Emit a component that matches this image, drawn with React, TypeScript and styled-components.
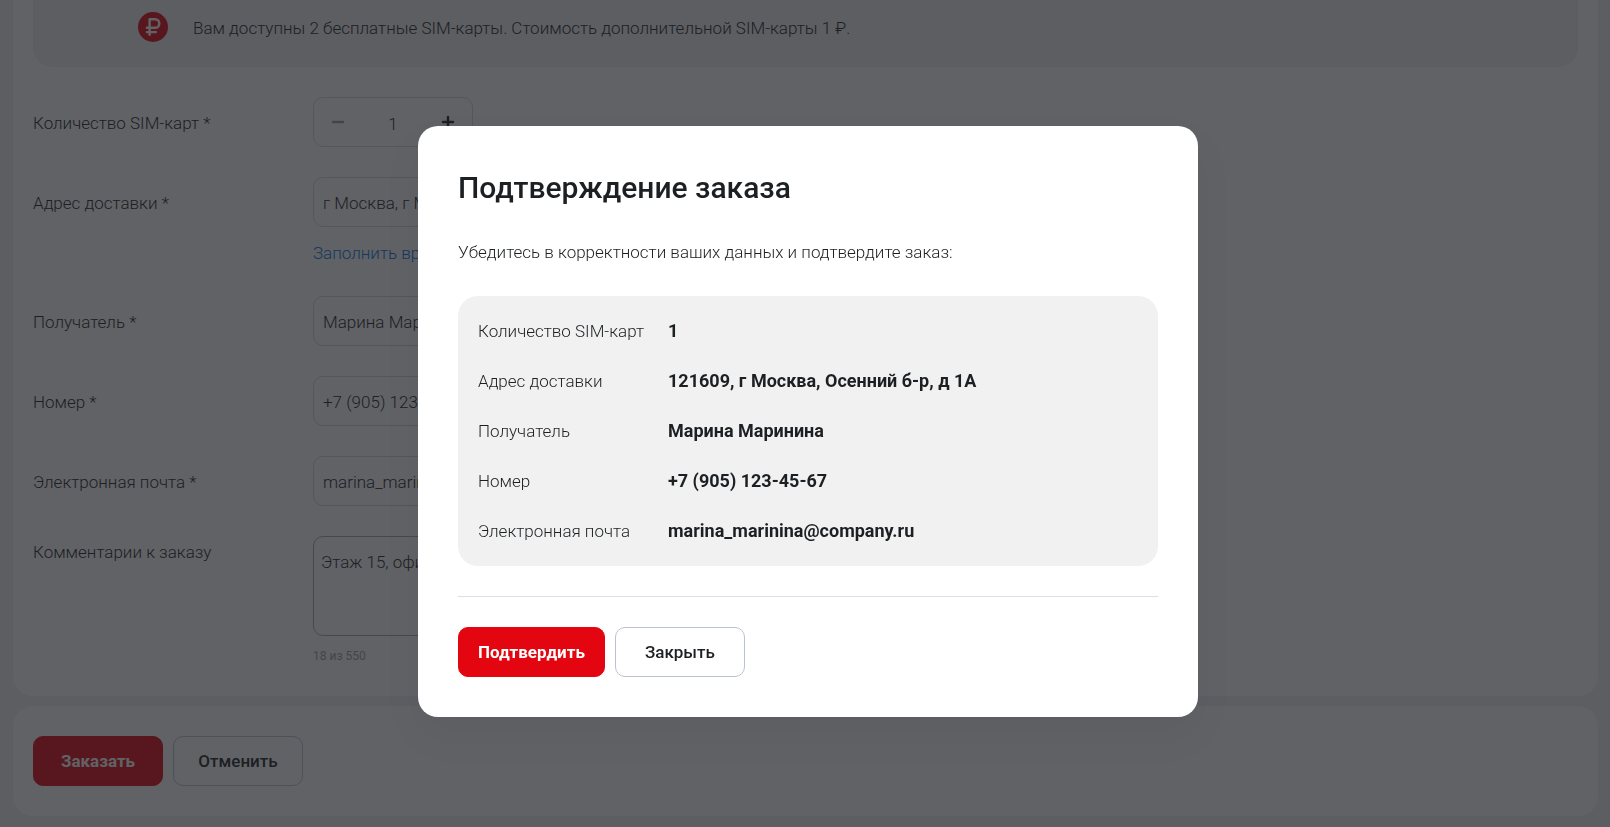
import React, { useState } from "react";
import styled, { createGlobalStyle, css } from "styled-components";

const ink = "#1d2023";
const red = "#e30611";
const fontStack = `Roboto, "Noto Sans", sans-serif`;

const GlobalStyle = createGlobalStyle`
  *, *::before, *::after { box-sizing: border-box; }
  body {
    margin: 0;
    background: #f0f0f6;
    color: ${ink};
    font: 300 17px/24px ${fontStack};
  }
  button, input, textarea { font: inherit; color: inherit; }
`;

const Page = styled.main`
  display: flex;
  flex-direction: column;
  gap: 10px;
  padding: 0 12px 11px 13px;
`;

const panel = css`
  background: #fff;
  padding: 30px 20px;
  border-radius: 20px;
`;

const FormPanel = styled.form`
  ${panel}
  padding-top: 0;
  border-radius: 0 0 20px 20px;
  display: flex;
  flex-direction: column;
  gap: 30px;
`;

const ActionsPanel = styled.div`
  ${panel}
`;

const Notice = styled.div`
  display: flex;
  align-items: center;
  gap: 25px;
  padding: 12px 20px 25px 105px;
  background: #f0f0f1;
  border-radius: 0 0 20px 20px;
`;

const NoticeText = styled.p`
  margin: 0;
  padding-top: 2px;
`;

const Row = styled.div`
  display: grid;
  grid-template-columns: 280px minmax(160px, 500px);
`;

const Label = styled.label<{ $top?: boolean }>`
  padding-top: 2px;
  line-height: ${(p) => (p.$top ? "28px" : "48px")};
`;

const Field = styled.div`
  display: flex;
  flex-direction: column;
  align-items: flex-start;
`;

const TextInput = styled.input`
  width: 100%;
  height: 50px;
  padding: 2px 9px 0;
  border: 1px solid #d4d7dc;
  border-radius: 10px;
  background: transparent;
`;

const Comment = styled.textarea`
  display: block;
  width: 100%;
  height: 100px;
  padding: 13px 7px;
  border: 1px solid #a6a9b0;
  border-radius: 10px;
  background: transparent;
  resize: none;
`;

const Hint = styled.span`
  margin-top: 10px;
  font-size: 12px;
  font-weight: 400;
  line-height: 20px;
  color: #969fa8;
`;

const TextLink = styled.a`
  margin-top: 14px;
  line-height: 25px;
  color: #0070e5;
  text-decoration: none;
`;

const Stepper = styled.div`
  display: grid;
  grid-template-columns: 48px 1fr 48px;
  width: 160px;
  height: 50px;
  border: 1px solid #d4d7dc;
  border-radius: 10px;
`;

const StepButton = styled.button`
  display: grid;
  place-items: center;
  padding: 0;
  border: 0;
  background: none;
  color: ${ink};

  &:disabled {
    color: #969fa8;
  }
`;

const StepValue = styled.input`
  width: 100%;
  padding: 4px 0 0;
  border: 0;
  background: none;
  text-align: center;
`;

const Buttons = styled.div`
  display: flex;
  gap: 10px;
`;

const Button = styled.button<{ $primary?: boolean }>`
  min-width: 130px;
  height: 50px;
  padding: 0 19px;
  border: 1px solid ${(p) => (p.$primary ? red : "#bcc3d0")};
  border-radius: 10px;
  background: ${(p) => (p.$primary ? red : "transparent")};
  color: ${(p) => (p.$primary ? "#fff" : ink)};
  font-weight: ${(p) => (p.$primary ? 700 : 500)};
`;

const Overlay = styled.div`
  position: fixed;
  inset: 0;
  display: grid;
  place-items: center;
  padding: 16px 0 0 6px;
  background: rgba(29, 32, 35, 0.7);
`;

const Dialog = styled.section`
  width: 780px;
  max-width: 100%;
  padding: 40px;
  border-radius: 20px;
  background: #fff;
  box-shadow: 0 18px 40px rgba(0, 25, 32, 0.05);
`;

const Title = styled.h2`
  margin: 0 0 30px;
  font-size: 30px;
  line-height: 44px;
  font-weight: 500;
`;

const Lead = styled.p`
  margin: 0 0 32px;
`;

const Summary = styled.dl`
  margin: 0;
  padding: 10px 20px;
  border-radius: 20px;
  background: #f1f1f1;
`;

const SummaryRow = styled.div`
  display: grid;
  grid-template-columns: 190px 1fr;
  line-height: 50px;
`;

const Term = styled.dt``;

const Value = styled.dd`
  margin: 0;
  font-size: 18px;
  font-weight: 700;
`;

const Divider = styled.hr`
  height: 1px;
  margin: 30px 0;
  border: 0;
  background: #dcdfe9;
`;

const RubleIcon = () => (
  <svg width="30" height="30" viewBox="0 0 30 30" fill="none" aria-hidden="true">
    <circle cx="15" cy="15" r="15" fill={red} />
    <path
      d="M11.6 22.7V7.2h5.4a4.3 4.3 0 0 1 0 8.6H8.9M8.9 20.1h9"
      stroke="#fff"
      strokeWidth="2.4"
      strokeLinecap="round"
      strokeLinejoin="round"
    />
  </svg>
);

const StepIcon = ({ plus }: { plus?: boolean }) => (
  <svg width="14" height="14" viewBox="0 0 14 14" fill="none" aria-hidden="true">
    <path
      d={plus ? "M2 7h10M7 2v10" : "M2 7h10"}
      stroke="currentColor"
      strokeWidth="2.4"
      strokeLinecap="round"
    />
  </svg>
);

const fields = [
  { id: "recipient", label: "Получатель *", value: "Марина Маринина" },
  { id: "phone", label: "Номер *", value: "+7 (905) 123-45-67" },
  { id: "email", label: "Электронная почта *", value: "marina_marinina@company.ru" },
];

const COMMENT_LIMIT = 550;

export default function App() {
  const [count, setCount] = useState(1);
  const [comment, setComment] = useState("Этаж 15, офис 1502");
  const [open, setOpen] = useState(true);

  const summary = [
    ["Количество SIM-карт", String(count)],
    ["Адрес доставки", "121609, г Москва, Осенний б-р, д 1А"],
    ["Получатель", "Марина Маринина"],
    ["Номер", "+7 (905) 123-45-67"],
    ["Электронная почта", "marina_marinina@company.ru"],
  ];

  return (
    <>
      <GlobalStyle />
      <Page>
        <FormPanel id="order" onSubmit={(e) => e.preventDefault()}>
          <Notice>
            <RubleIcon />
            <NoticeText>
              Вам доступны 2 бесплатные SIM-карты. Стоимость дополнительной SIM-карты 1 ₽.
            </NoticeText>
          </Notice>

          <Row>
            <Label htmlFor="count">Количество SIM-карт *</Label>
            <Stepper>
              <StepButton
                type="button"
                aria-label="Уменьшить"
                disabled={count <= 1}
                onClick={() => setCount(count - 1)}
              >
                <StepIcon />
              </StepButton>
              <StepValue id="count" value={count} readOnly />
              <StepButton type="button" aria-label="Увеличить" onClick={() => setCount(count + 1)}>
                <StepIcon plus />
              </StepButton>
            </Stepper>
          </Row>

          <Row>
            <Label htmlFor="address">Адрес доставки *</Label>
            <Field>
              <TextInput id="address" defaultValue="г Москва, г Москва, Осенний б-р, д 1А" />
              <TextLink href="#manual">Заполнить вручную</TextLink>
            </Field>
          </Row>

          {fields.map((f) => (
            <Row key={f.id}>
              <Label htmlFor={f.id}>{f.label}</Label>
              <TextInput id={f.id} defaultValue={f.value} />
            </Row>
          ))}

          <Row>
            <Label htmlFor="comment" $top>
              Комментарии к заказу
            </Label>
            <Field>
              <Comment
                id="comment"
                value={comment}
                maxLength={COMMENT_LIMIT}
                onChange={(e) => setComment(e.target.value)}
              />
              <Hint>
                {comment.length} из {COMMENT_LIMIT}
              </Hint>
            </Field>
          </Row>
        </FormPanel>

        <ActionsPanel>
          <Buttons>
            <Button $primary type="button" onClick={() => setOpen(true)}>
              Заказать
            </Button>
            <Button type="reset" form="order">
              Отменить
            </Button>
          </Buttons>
        </ActionsPanel>
      </Page>

      {open && (
        <Overlay>
          <Dialog role="dialog" aria-modal="true" aria-labelledby="dialog-title">
            <Title id="dialog-title">Подтверждение заказа</Title>
            <Lead>Убедитесь в корректности ваших данных и подтвердите заказ:</Lead>
            <Summary>
              {summary.map(([term, value]) => (
                <SummaryRow key={term}>
                  <Term>{term}</Term>
                  <Value>{value}</Value>
                </SummaryRow>
              ))}
            </Summary>
            <Divider />
            <Buttons>
              <Button $primary type="button" onClick={() => setOpen(false)}>
                Подтвердить
              </Button>
              <Button type="button" onClick={() => setOpen(false)}>
                Закрыть
              </Button>
            </Buttons>
          </Dialog>
        </Overlay>
      )}
    </>
  );
}
